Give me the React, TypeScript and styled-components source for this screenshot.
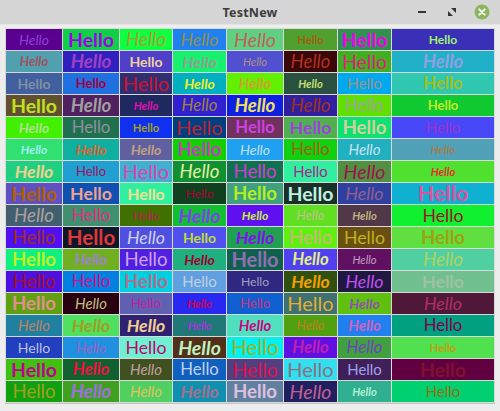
import styled, { createGlobalStyle } from "styled-components";

const GlobalStyle = createGlobalStyle`
  html, body {
    margin: 0;
    padding: 0;
    background: #ededed;
  }
  body {
    font-family: Lato, "Noto Sans", sans-serif;
  }
`;

type Cell = [string, string, string, number];

// bg, text colour, style (n / b / i / bi), font size
const rows: Cell[][] = [
  [
    ["#5a0090", "#8a40d8", "i", 15],
    ["#10d048", "#a000e8", "b", 21],
    ["#10ff40", "#a0a030", "i", 20],
    ["#2080f0", "#909050", "i", 19],
    ["#60d080", "#c06060", "i", 21],
    ["#50a030", "#a06010", "b", 12],
    ["#309050", "#f000f0", "b", 21],
    ["#3a30b8", "#a0f070", "b", 13],
  ],
  [
    ["#50a0b0", "#a05060", "bi", 14],
    ["#3020c0", "#a040c0", "bi", 20],
    ["#5040c8", "#f0d0a0", "b", 15],
    ["#18f070", "#90a090", "bi", 17],
    ["#5050d0", "#b09080", "i", 12],
    ["#3a0808", "#b03020", "i", 20],
    ["#40b020", "#e02080", "n", 21],
    ["#20b0c8", "#90a0e0", "bi", 20],
  ],
  [
    ["#4060a0", "#8090a0", "b", 15],
    ["#2070e0", "#a00040", "b", 14],
    ["#303070", "#d01030", "n", 21.5],
    ["#00b0c0", "#f0f020", "bi", 15],
    ["#60f000", "#d0a030", "bi", 16],
    ["#2a5040", "#c0e070", "bi", 12],
    ["#00a8f0", "#a09080", "n", 16],
    ["#30c8b0", "#a0c020", "b", 18],
  ],
  [
    ["#605030", "#c0e020", "b", 21],
    ["#502060", "#a0a0a0", "bi", 20],
    ["#202860", "#e010b0", "bi", 12],
    ["#3020d0", "#a08040", "i", 18],
    ["#1020e0", "#f0e060", "bi", 20],
    ["#3020a0", "#a03020", "i", 20],
    ["#60e000", "#a0a0a0", "n", 18],
    ["#10c830", "#c0f020", "b", 14],
  ],
  [
    ["#40f000", "#b0e090", "bi", 15],
    ["#207050", "#9090a0", "n", 18],
    ["#1030f0", "#a0a020", "b", 12],
    ["#004080", "#c02030", "n", 21.5],
    ["#703060", "#d040e0", "b", 18],
    ["#50b050", "#a040e0", "b", 19],
    ["#10e070", "#d0d0a0", "b", 20],
    ["#4848f8", "#a030d0", "n", 16],
  ],
  [
    ["#30e070", "#a0f0f0", "bi", 13],
    ["#10b0a0", "#e06030", "bi", 15],
    ["#6060a0", "#c0a080", "bi", 15],
    ["#10d000", "#c040c0", "b", 20],
    ["#20a0f0", "#c0e0f0", "i", 15],
    ["#10d010", "#a06010", "n", 18],
    ["#20b0c0", "#d0e0f0", "i", 16],
    ["#50a0b8", "#a08050", "bi", 12],
  ],
  [
    ["#20d080", "#f0d090", "bi", 19],
    ["#20a0d0", "#a01060", "n", 14],
    ["#40b0d0", "#e040b0", "n", 21.5],
    ["#109030", "#e0f0a0", "i", 20],
    ["#107050", "#d040d0", "n", 20],
    ["#30f0a0", "#b02090", "n", 16],
    ["#509040", "#a01050", "i", 21],
    ["#50e030", "#e03030", "bi", 12],
  ],
  [
    ["#6050c0", "#b06000", "b", 21],
    ["#1050b0", "#f0a090", "b", 19],
    ["#30f0a0", "#f0e090", "b", 17],
    ["#104020", "#b00030", "n", 13],
    ["#40a080", "#b0f020", "b", 20],
    ["#183028", "#c0f0e0", "b", 21],
    ["#3040a0", "#906090", "i", 19],
    ["#10b0d0", "#e050a0", "b", 23],
  ],
  [
    ["#406070", "#b0a0a0", "i", 20],
    ["#409070", "#e03080", "n", 18],
    ["#407000", "#a03040", "b", 12],
    ["#10c030", "#8040f0", "bi", 20.5],
    ["#6010f0", "#c0f040", "bi", 13],
    ["#60e020", "#c0c090", "i", 14],
    ["#503848", "#c0b080", "bi", 12],
    ["#10f030", "#a01020", "n", 19],
  ],
  [
    ["#5010f0", "#a03010", "n", 20],
    ["#101828", "#e03838", "b", 22],
    ["#5050e0", "#d0d0f0", "i", 19],
    ["#5050f0", "#c0e030", "b", 15],
    ["#20a050", "#8010f0", "bi", 19],
    ["#60f010", "#d0b080", "n", 20],
    ["#6a5010", "#c0b020", "n", 19],
    ["#60e040", "#a0a010", "b", 20],
  ],
  [
    ["#10f080", "#c0f020", "b", 20],
    ["#70b020", "#a080d0", "bi", 16],
    ["#5020e0", "#d0a0f0", "n", 20],
    ["#20b080", "#a00030", "bi", 15],
    ["#106050", "#9070b0", "b", 21.5],
    ["#5040f0", "#e0f080", "bi", 18],
    ["#601060", "#c0a0c0", "i", 12],
    ["#50d0a0", "#b0d060", "i", 20],
  ],
  [
    ["#5010e0", "#a01020", "n", 20],
    ["#0080e0", "#d01090", "n", 18],
    ["#00d0e0", "#b07090", "b", 20],
    ["#60a0e0", "#c0d0e0", "n", 16],
    ["#302880", "#a0a0c0", "n", 13],
    ["#305010", "#f0a000", "bi", 19],
    ["#201840", "#c050f0", "i", 19],
    ["#70c090", "#a0c0a0", "b", 19],
  ],
  [
    ["#60a010", "#e09090", "b", 20],
    ["#280010", "#c0c080", "i", 16],
    ["#6060b0", "#c020a0", "n", 14],
    ["#2828f0", "#d00050", "bi", 12],
    ["#1060d0", "#d03080", "n", 14],
    ["#407070", "#e0b030", "n", 21.5],
    ["#60c010", "#9050b0", "bi", 15],
    ["#501838", "#b03060", "i", 19],
  ],
  [
    ["#2080a0", "#c08060", "i", 16],
    ["#50e060", "#a0a020", "bi", 19],
    ["#302070", "#f0d090", "bi", 19],
    ["#207878", "#c020f0", "i", 12],
    ["#50e0c0", "#d00080", "bi", 16],
    ["#50a010", "#c08020", "i", 14],
    ["#2080f0", "#d060c0", "bi", 16],
    ["#00a080", "#800050", "n", 18],
  ],
  [
    ["#2040c0", "#c0c0e0", "n", 15],
    ["#2090e0", "#a060c0", "i", 15],
    ["#70f0d0", "#c00070", "n", 19],
    ["#503018", "#c0f0c0", "bi", 21],
    ["#00f0f0", "#a0b020", "n", 22],
    ["#6010e0", "#c020b0", "bi", 18],
    ["#40a040", "#7040c0", "i", 18],
    ["#50e050", "#c0a010", "b", 12],
  ],
  [
    ["#40c010", "#c00090", "b", 21],
    ["#106030", "#f01040", "bi", 18],
    ["#405020", "#c0a0a0", "i", 16],
    ["#1060c0", "#c0d0f0", "n", 18],
    ["#504080", "#e01050", "n", 21],
    ["#30e0f0", "#907080", "n", 21.5],
    ["#402058", "#a0a0f0", "n", 16],
    ["#600040", "#801030", "b", 21],
  ],
  [
    ["#10a010", "#a0a020", "n", 20],
    ["#40a020", "#a070e0", "bi", 20],
    ["#50d060", "#e0c060", "i", 16],
    ["#1090b0", "#a07090", "bi", 19],
    ["#6080a0", "#e0c0e0", "b", 20],
    ["#202060", "#c06090", "i", 21],
    ["#30b090", "#b0f0d0", "bi", 12],
    ["#00d070", "#907010", "n", 16],
  ],
];

const Window = styled.div`
  width: 500px;
  height: 411px;
  display: flex;
  flex-direction: column;
  background: #ededed;
`;

const TitleBar = styled.div`
  height: 24px;
  flex: none;
  background: #d6d6d6;
  position: relative;
  display: flex;
  align-items: center;
  justify-content: center;
  border-bottom: 1px solid #e4e4e4;
`;

const Title = styled.span`
  font-family: "Noto Sans", "DejaVu Sans", sans-serif;
  font-weight: 700;
  font-size: 12.5px;
  color: #3c3c3c;
  letter-spacing: 0.2px;
`;

const Controls = styled.div`
  position: absolute;
  right: 10px;
  top: 0;
  height: 24px;
  display: flex;
  align-items: center;
  gap: 14px;
`;

const CtlButton = styled.div`
  width: 16px;
  height: 16px;
  display: flex;
  align-items: center;
  justify-content: center;
`;

const Body = styled.div`
  flex: 1;
  padding: 3px 5px 0 5px;
`;

const Table = styled.div`
  display: grid;
  grid-template-columns: 56px 56px 52px 53px 56px 53px 53px 1fr;
  grid-auto-rows: 21px;
  gap: 1px;
  padding: 1px;
  background: #d9d9d9;
  border-bottom: 1px solid #c4c4c4;
`;

const Item = styled.div<{ $bg: string; $fg: string; $kind: string; $size: number }>`
  background: ${(p) => p.$bg};
  color: ${(p) => p.$fg};
  font-size: ${(p) => Math.round(p.$size * 0.93 * 10) / 10}px;
  font-weight: ${(p) => (p.$kind.includes("b") ? 700 : 400)};
  font-style: ${(p) => (p.$kind.includes("i") ? "italic" : "normal")};
  font-family: Lato, "Noto Sans", sans-serif;
  display: flex;
  align-items: center;
  justify-content: center;
  white-space: nowrap;
  line-height: 21px;
  min-width: 0;
`;

export default function App() {
  return (
    <Window>
      <GlobalStyle />
      <TitleBar>
        <Title>TestNew</Title>
        <Controls>
          <CtlButton>
            <svg width="10" height="4" viewBox="0 0 10 4">
              <rect x="1" y="1" width="8" height="2" fill="#333" />
            </svg>
          </CtlButton>
          <CtlButton>
            <svg width="10" height="10" viewBox="0 0 10 10">
              <polygon points="4,1 9,1 9,6" fill="#333" />
              <polygon points="1,4 1,9 6,9" fill="#333" />
            </svg>
          </CtlButton>
          <CtlButton>
            <svg width="16" height="16" viewBox="0 0 16 16">
              <circle cx="8" cy="8" r="7.5" fill="#8db45e" />
              <path d="M5.3 5.3 L10.7 10.7 M10.7 5.3 L5.3 10.7" stroke="#fff" strokeWidth="1.8" strokeLinecap="round" />
            </svg>
          </CtlButton>
        </Controls>
      </TitleBar>
      <Body>
        <Table>
          {rows.flatMap((row, r) =>
            row.map(([bg, fg, kind, size], c) => (
              <Item key={`${r}-${c}`} $bg={bg} $fg={fg} $kind={kind} $size={size}>
                Hello
              </Item>
            ))
          )}
        </Table>
      </Body>
    </Window>
  );
}
